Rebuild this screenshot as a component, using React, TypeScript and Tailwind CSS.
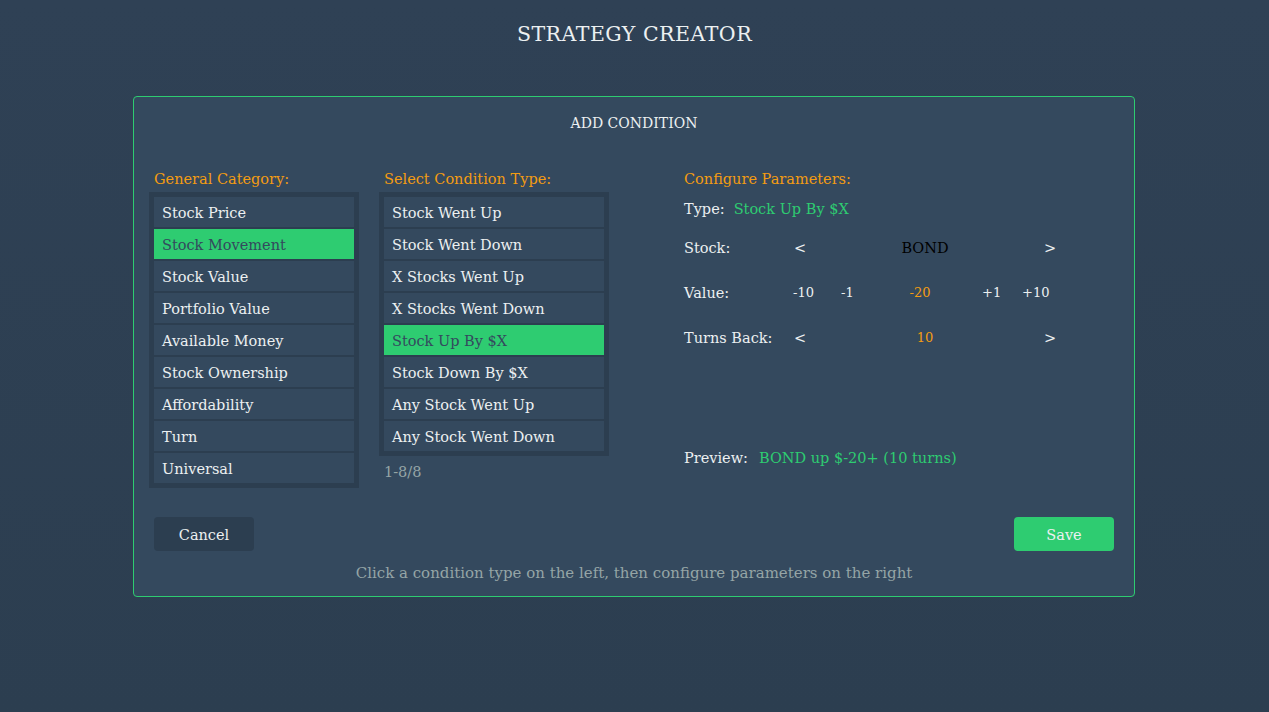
import React, { useState } from 'react';

const categories = [
  'Stock Price',
  'Stock Movement',
  'Stock Value',
  'Portfolio Value',
  'Available Money',
  'Stock Ownership',
  'Affordability',
  'Turn',
  'Universal',
];

const conditionTypes = [
  'Stock Went Up',
  'Stock Went Down',
  'X Stocks Went Up',
  'X Stocks Went Down',
  'Stock Up By $X',
  'Stock Down By $X',
  'Any Stock Went Up',
  'Any Stock Went Down',
];

const ListItem = ({ label, active, onClick }: { label: string; active: boolean; onClick: () => void }) => (
  <button
    onClick={onClick}
    className={`h-[30px] px-2 pt-[3px] text-left text-[14.5px] ${
      active ? 'bg-[#2ecc71] text-[#34495e]' : 'bg-[#34495e] text-[#ecf0f1]'
    }`}
  >
    {label}
  </button>
);

const App = () => {
  const [category, setCategory] = useState('Stock Movement');
  const [condition, setCondition] = useState('Stock Up By $X');
  const [value, setValue] = useState(-20);
  const [turns, setTurns] = useState(10);

  return (
    <div
      className="min-h-[712px] w-full bg-gradient-to-b from-[#2f4155] to-[#2c3e50] text-[#ecf0f1]"
      style={{ fontFamily: '"DejaVu Serif", serif' }}
    >
      <h1 className="pt-[21px] text-center text-[20.5px] leading-[26px] tracking-[0.5px] text-[#ecf0f1]">STRATEGY CREATOR</h1>

      <div className="ml-[133px] mt-[49px] flex h-[501px] w-[1002px] flex-col rounded-[4px] border border-[#2ecc71] bg-[#34495e] px-[20px]">
        <h2 className="pt-[17px] text-center text-[14px] leading-[18px]">ADD CONDITION</h2>

        <div className="mt-[37px] flex">
          {/* general category column */}
          <div className="w-[210px]">
            <div className="text-[14.5px] leading-[20px] text-[#f39c12]">General Category:</div>
            <div className="-ml-[5px] mt-[3px] flex w-[210px] flex-col gap-[2px] bg-[#2c3e50] p-[5px]">
              {categories.map((c) => (
                <ListItem key={c} label={c} active={c === category} onClick={() => setCategory(c)} />
              ))}
            </div>
          </div>

          {/* condition type column */}
          <div className="ml-[20px] w-[230px]">
            <div className="text-[14.5px] leading-[20px] text-[#f39c12]">Select Condition Type:</div>
            <div className="-ml-[5px] mt-[3px] flex w-[230px] flex-col gap-[2px] bg-[#2c3e50] p-[5px]">
              {conditionTypes.map((c) => (
                <ListItem key={c} label={c} active={c === condition} onClick={() => setCondition(c)} />
              ))}
            </div>
            <div className="mt-[6px] text-[14.5px] leading-[20px] text-[#95a5a6]">1-8/8</div>
          </div>

          {/* parameters column */}
          <div className="ml-[70px] flex-1 text-[14.5px]">
            <div className="leading-[20px] text-[#f39c12]">Configure Parameters:</div>
            <div className="mt-[10px] flex leading-[20px]">
              <span>Type:</span>
              <span className="ml-[9px] text-[#2ecc71]">{condition}</span>
            </div>

            <div className="mt-[19px] flex items-center leading-[20px]">
              <span className="w-[110px]">Stock:</span>
              <button className="w-[12px] text-left">&lt;</button>
              <span className="w-[238px] text-center text-black">BOND</span>
              <button className="w-[12px] text-left">&gt;</button>
            </div>

            <div className="mt-[25px] flex items-center text-[13px] leading-[20px]">
              <span className="w-[109px] text-[14.5px]">Value:</span>
              <button onClick={() => setValue(value - 10)} className="w-[48px] text-left">-10</button>
              <button onClick={() => setValue(value - 1)} className="w-[40px] text-left">-1</button>
              <span className="w-[78px] text-center text-[#f39c12]">{value}</span>
              <button onClick={() => setValue(value + 1)} className="ml-[23px] w-[40px] text-left">+1</button>
              <button onClick={() => setValue(value + 10)}>+10</button>
            </div>

            <div className="mt-[25px] flex items-center leading-[20px]">
              <span className="w-[110px]">Turns Back:</span>
              <button onClick={() => setTurns(Math.max(1, turns - 1))} className="w-[12px] text-left">&lt;</button>
              <span className="w-[238px] text-center text-[13px] text-[#f39c12]">{turns}</span>
              <button onClick={() => setTurns(turns + 1)} className="w-[12px] text-left">&gt;</button>
            </div>

            <div className="mt-[100px] flex leading-[20px]">
              <span>Preview:</span>
              <span className="ml-[11px] text-[#2ecc71]">
                BOND up ${value}+ ({turns} turns)
              </span>
            </div>
          </div>
        </div>

        <div className="mt-auto flex justify-between">
          <button className="h-[34px] w-[100px] rounded-[4px] bg-[#2c3e50] pt-[4px] text-[14.5px] text-[#ecf0f1]">Cancel</button>
          <button className="h-[34px] w-[100px] rounded-[4px] bg-[#2ecc71] pt-[4px] text-[14.5px] text-[#ecf0f1]">Save</button>
        </div>
        <p className="mb-[13px] mt-[12px] text-center text-[15px] leading-[20px] text-[#95a5a6]">
          Click a condition type on the left, then configure parameters on the right
        </p>
      </div>
    </div>
  );
};

export default App;
